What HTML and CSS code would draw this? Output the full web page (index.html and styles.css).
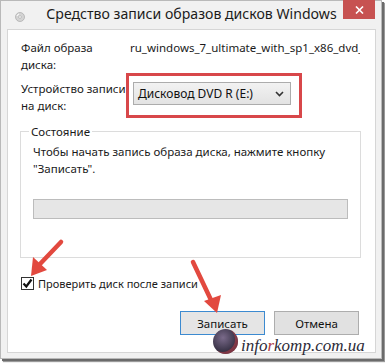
FILE: index.html
```html
<!DOCTYPE html>
<html lang="ru">
<head>
<meta charset="utf-8">
<title>Средство записи образов дисков Windows</title>
<link rel="stylesheet" href="styles.css">
</head>
<body>
<div class="window">
  <div class="titlebar">
    <span class="app-icon">
      <svg width="10" height="10" viewBox="0 0 10 10"><circle cx="5" cy="5" r="4.5" fill="#d4d4d4" stroke="#b0b0b0" stroke-width="0.8"/><circle cx="5" cy="5" r="1.4" fill="#f4f4f4" stroke="#a8a8a8" stroke-width="0.6"/><path d="M2 4 A3 3 0 0 1 4 2" stroke="#fff" stroke-width="1" fill="none"/></svg>
    </span>
    <span class="title">Средство записи образов дисков Windows</span>
    <span class="close"><svg width="9" height="8" viewBox="0 0 9 8"><path d="M1 0.5 L8 7.5 M8 0.5 L1 7.5" stroke="#fff" stroke-width="1.6"/></svg></span>
  </div>
  <div class="content">
    <div class="form">
      <div class="lbl">Файл образа<br>диска:</div>
      <div class="val">ru_windows_7_ultimate_with_sp1_x86_dvd_u_677460.iso</div>
      <div class="lbl lbl2">Устройство записи<br>на диск:</div>
      <div class="highlight">
        <div class="combo"><span>Дисковод DVD R (E:)</span><svg width="9" height="6" viewBox="0 0 9 6"><path d="M1 1 L4.5 4.5 L8 1" stroke="#333" stroke-width="1.6" fill="none"/></svg></div>
      </div>
    </div>
    <fieldset class="status">
      <legend>Состояние</legend>
      <p>Чтобы начать запись образа диска, нажмите кнопку<br>"Записать".</p>
      <div class="progress"></div>
    </fieldset>
    <div class="check">
      <span class="box"><svg width="11" height="11" viewBox="0 0 11 11"><path d="M1.5 5.5 L4.3 8.5 L9.5 1.5" stroke="#111" stroke-width="2.2" fill="none"/></svg></span>
      <span class="check-label">Проверить диск после записи</span>
    </div>
    <div class="buttons">
      <span class="btn default">Записать</span>
      <span class="btn">Отмена</span>
    </div>
  </div>

  <svg class="arrows" width="385" height="364" viewBox="0 0 385 364">
    <g stroke="#e2493f" stroke-width="4.5" stroke-linecap="round" fill="none">
      <path d="M61 242 L40 264"/>
      <path d="M193 262 L211 300"/>
    </g>
    <g fill="#e2493f">
      <path d="M31 276 L33 257 L47 270 Z"/>
      <path d="M217 313 L204 301 L221 295 Z"/>
    </g>
  </svg>

  <div class="watermark">
    <span class="logo"></span>
    <span class="wm-text">info<span class="wm-r">r</span>komp.com.ua</span>
  </div>
</div>
</body>
</html>
```

FILE: styles.css
```css
html, body {
  margin: 0;
  padding: 0;
  background: #ffffff;
}

body {
  width: 385px;
  height: 364px;
  overflow: hidden;
  font-family: "Noto Sans", "Open Sans", sans-serif;
  font-size: 11.5px;
  color: #1a1a1a;
}

.window {
  position: relative;
  box-sizing: border-box;
  width: 382px;
  height: 359px;
  background: #f1f1f1;
  border: 1px solid #b9b9b9;
  padding: 0 5px 5px 6px;
  box-shadow: 2px 2px 0 #6b6b6b, 3px 3px 1px #9a9a9a;
}

.titlebar {
  position: relative;
  height: 28px;
  display: flex;
  align-items: center;
  justify-content: center;
}

.app-icon {
  position: absolute;
  left: 8px;
  top: 11px;
  display: flex;
}

.title {
  font-size: 14.1px;
  color: #1b1b1b;
  margin-top: -3px;
  white-space: nowrap;
}

.close {
  position: absolute;
  right: 1px;
  top: -1px;
  width: 32px;
  height: 19px;
  background: #c75251;
  display: flex;
  align-items: center;
  justify-content: center;
}

.content {
  box-sizing: border-box;
  height: 324px;
  background: #ffffff;
  border: 1px solid #d6d6d6;
  padding: 9px 0 0 0;
}

.form {
  display: grid;
  grid-template-columns: 105px 1fr;
  padding: 0 15px 0 13px;
  line-height: 17px;
}

.lbl {
  height: 34px;
  color: #1a1a1a;
  white-space: nowrap;
}

.val {
  padding-left: 4px;
  white-space: nowrap;
  overflow: hidden;
}

.lbl2 {
  margin-top: 7px;
}

.highlight {
  justify-self: start;
  border: 3px solid #d8474a;
  padding: 6px 8px 10px 4px;
}

.combo {
  box-sizing: border-box;
  width: 158px;
  height: 23px;
  border: 1px solid #acacac;
  background: linear-gradient(#f2f2f2, #e3e3e3);
  display: flex;
  align-items: center;
  justify-content: space-between;
  padding: 0 6px 0 4px;
  font-size: 12px;
  color: #111;
}

.status {
  margin: 5px 14px 0 12px;
  padding: 3px 12px 38px 12px;
  border: 1px solid #dcdcdc;
  line-height: 17px;
}

.status legend {
  padding: 0 2px;
  margin-left: -4px;
  color: #1a1a1a;
}

.status p {
  margin: 0;
}

.progress {
  margin-top: 22px;
  height: 20px;
  box-sizing: border-box;
  border: 1px solid #bcbcbc;
  background: #e6e6e6;
}

.check {
  display: flex;
  align-items: center;
  gap: 4px;
  margin: 19px 0 0 13px;
  height: 13px;
}

.check-label {
  font-size: 11px;
}

.box {
  box-sizing: border-box;
  width: 13px;
  height: 13px;
  border: 1px solid #333;
  background: #fff;
  display: flex;
  align-items: center;
  justify-content: center;
}

.buttons {
  display: flex;
  justify-content: flex-end;
  gap: 9px;
  margin-top: 21px;
  padding-right: 16px;
}

.btn {
  box-sizing: border-box;
  width: 85px;
  height: 24px;
  display: flex;
  align-items: center;
  justify-content: center;
  border: 1px solid #adadad;
  background: #e1e1e1;
  color: #111;
}

.btn.default {
  border: 1px solid #3c8ad0;
  background: #e5e5e5;
}

.arrows {
  position: absolute;
  left: -1px;
  top: -1px;
  pointer-events: none;
}

.watermark {
  position: absolute;
  left: 212px;
  top: 328px;
  display: flex;
  align-items: center;
  gap: 3px;
}

.logo {
  width: 25px;
  height: 25px;
  border-radius: 50%;
  background: radial-gradient(circle at 40% 35%, #7a6a8a, #3a3448 60%, #24202c);
  box-shadow: inset -3px -2px 0 rgba(200, 60, 70, 0.5);
}

.wm-text {
  font-family: "Liberation Serif", "DejaVu Serif", serif;
  font-style: italic;
  font-size: 17px;
  line-height: 17px;
  color: #2c2a38;
  margin-top: 7px;
}

.wm-r {
  color: #b03a3f;
}
```
